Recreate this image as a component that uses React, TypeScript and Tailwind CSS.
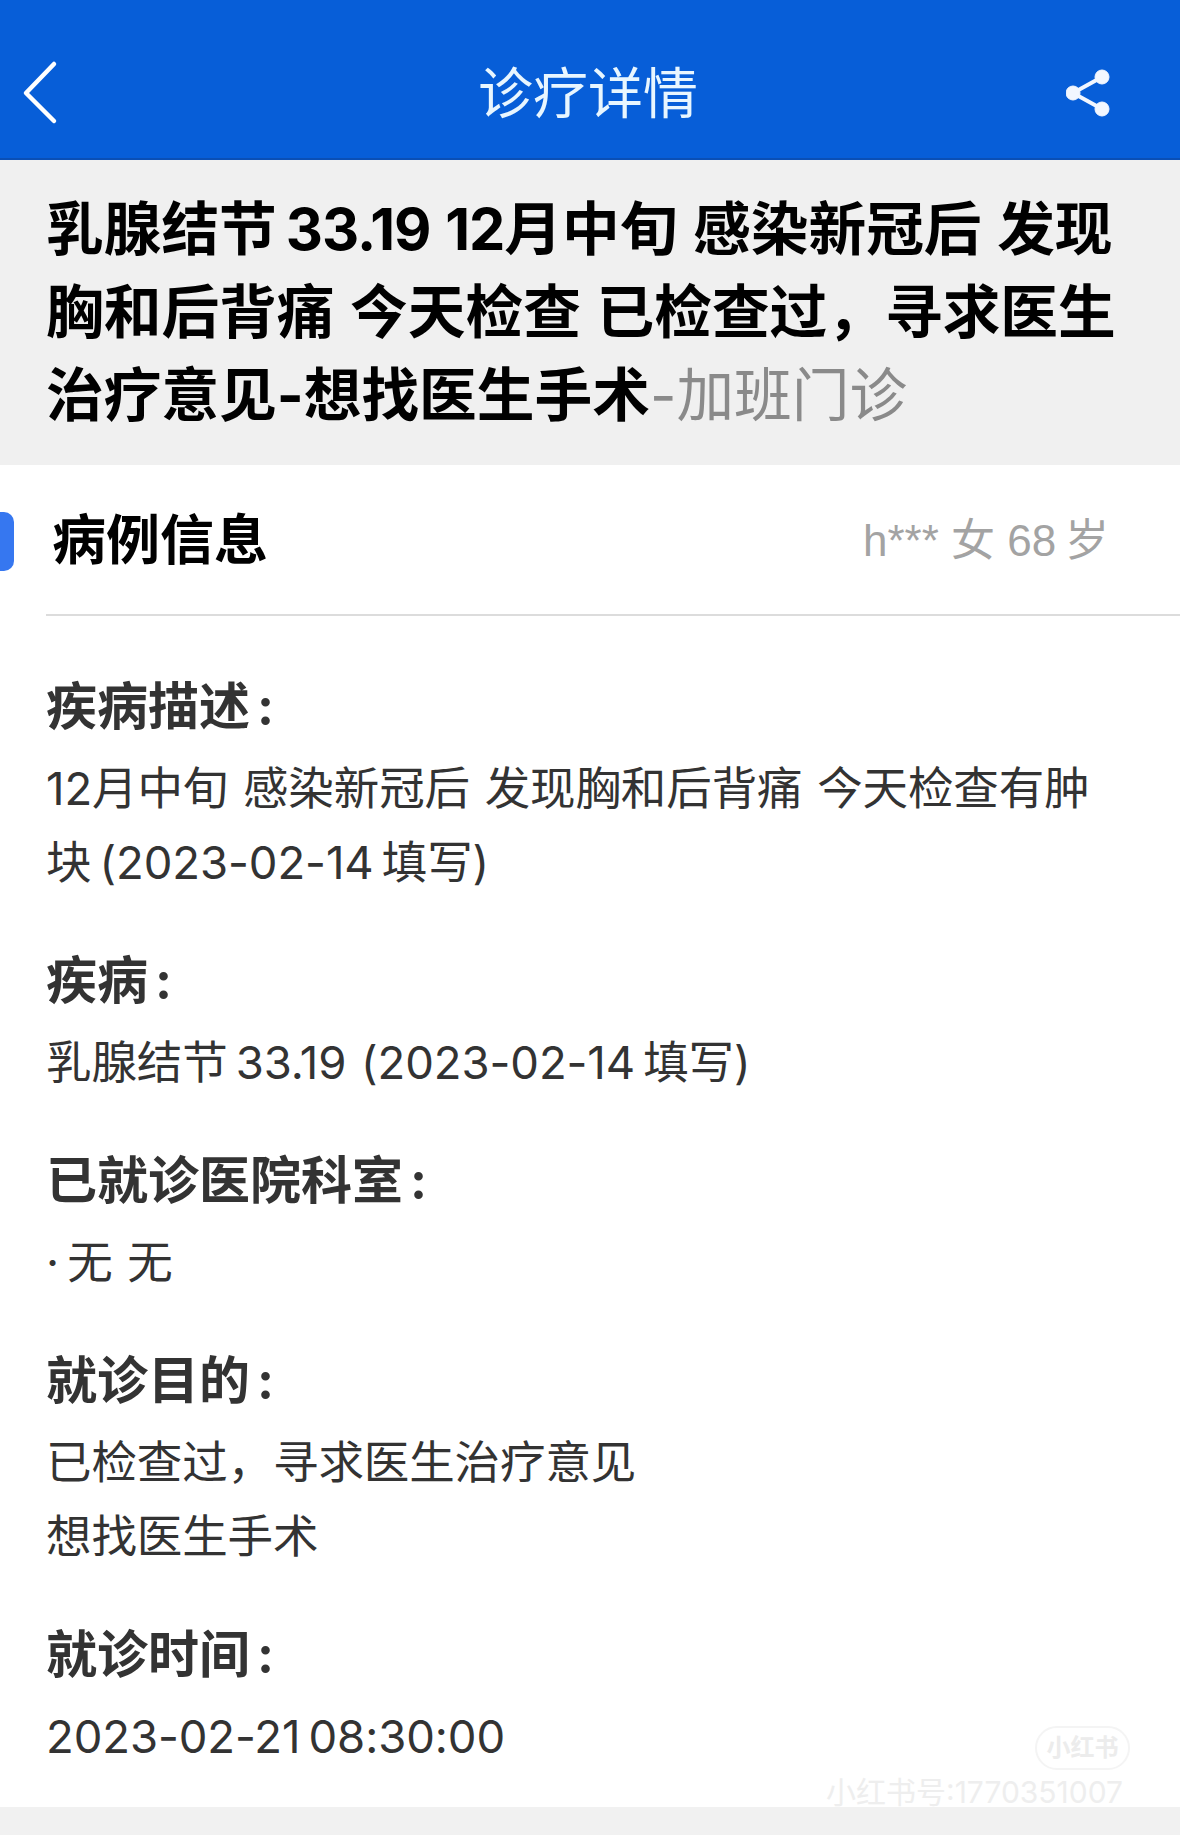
const sections = [
  { label: "疾病描述", lines: ["12月中旬 感染新冠后 发现胸和后背痛 今天检查有肿", "块\u2009(2023-02-14\u2009填写)"] },
  { label: "疾病", lines: ["乳腺结节\u200933.19 (2023-02-14\u2009填写)"] },
  { label: "已就诊医院科室", lines: ["\u00b7\u2009无 无"] },
  { label: "就诊目的", lines: ["已检查过\uff0c寻求医生治疗意见", "想找医生手术"] },
  { label: "就诊时间", lines: ["2023-02-21\u200908:30:00"] },
];

function BackIcon() {
  return (
    <svg width="40" height="72" viewBox="0 0 40 72" fill="none" stroke="#ffffff" strokeWidth="4.5" strokeLinecap="round" strokeLinejoin="round">
      <path d="M34 7 L6 36 L34 64" />
    </svg>
  );
}

function ShareIcon() {
  return (
    <svg width="44" height="48" viewBox="0 0 44 48" fill="#f2f7ff" stroke="#f2f7ff">
      <path d="M36 8 L7 24 L36 40" fill="none" strokeWidth="4" />
      <circle cx="36" cy="8" r="7" />
      <circle cx="7" cy="24" r="7" />
      <circle cx="36" cy="40" r="7" />
    </svg>
  );
}

export default function App() {
  return (
    <div className="relative h-[1846px] w-[1180px] overflow-hidden bg-white font-['Inter','Noto_Sans_CJK_SC',sans-serif] text-[#333333]">
      <header className="grid h-[160px] grid-cols-[1fr_auto_1fr] items-center border-b-2 border-[#0a4fb5] bg-[#075ed8] px-[20px] pt-[28px]">
        <BackIcon />
        <h1 className="pr-[4px] text-[55px] leading-none font-normal text-[#e8f6ff]">诊疗详情</h1>
        <div className="flex justify-end pr-[50px]">
          <ShareIcon />
        </div>
      </header>

      <div className="h-[305px] bg-[#f0f0f0] pt-[28px] pl-[46px] text-[57.7px] leading-[83px] font-bold text-black [word-spacing:2px]">
        <div className="whitespace-nowrap">
          {"乳腺结节\u2009"}
          <span className="tracking-[-1px]">33.19 12</span>月中旬 感染新冠后 发现
        </div>
        <div className="whitespace-nowrap">{"胸和后背痛 今天检查 已检查过\uff0c寻求医生"}</div>
        <div className="whitespace-nowrap">
          治疗意见-想找医生手术<span className="font-normal text-[#8a8a8a]">-加班门诊</span>
        </div>
      </div>

      <div className="ml-[46px] flex h-[151px] items-center border-b-2 border-[#dcdcdc] pt-[2px]">
        <h2 className="ml-[6px] text-[54px] leading-none font-bold text-black">病例信息</h2>
        <span className="mr-[71px] ml-auto font-['Liberation_Sans','Noto_Sans_CJK_SC',sans-serif] text-[44px] leading-none text-[#a3a3a3]">
          {"h*** 女 68\u2009岁"}
        </span>
      </div>

      <div className="flex flex-col gap-[44px] pt-[54px] pl-[46px]">
        {sections.map((section) => (
          <div key={section.label}>
            <div className="mb-[8px] text-[51px] leading-[74px] font-bold whitespace-nowrap text-[#333333]">
              {section.label}
              <span className="ml-[7px]">:</span>
            </div>
            {section.lines.map((line) => (
              <div key={line} className="text-[45.5px] leading-[74px] tracking-[-0.1px] whitespace-nowrap text-[#333333] [word-spacing:2px]">
                {line}
              </div>
            ))}
          </div>
        ))}
      </div>

      {/* blue marker sits over the section header's left edge */}
      <div className="absolute top-[512px] left-0 h-[59px] w-[14px] rounded-r-[10px] bg-[#3677f0]" />

      {/* bottom strip and faint watermark */}
      <div className="absolute top-[1807px] right-0 left-0 h-[28px] bg-[#f1f1f1]" />
      <div className="absolute top-[1726px] left-[1035px] flex h-[44px] w-[95px] items-center justify-center rounded-[22px] border-2 border-[#f4f4f4] text-[24px] font-bold text-[#ececec]">
        小红书
      </div>
      <div className="absolute top-[1776px] left-[826px] text-[30px] leading-[32px] whitespace-nowrap text-[#eeeeee]">小红书号:1770351007</div>
    </div>
  );
}
